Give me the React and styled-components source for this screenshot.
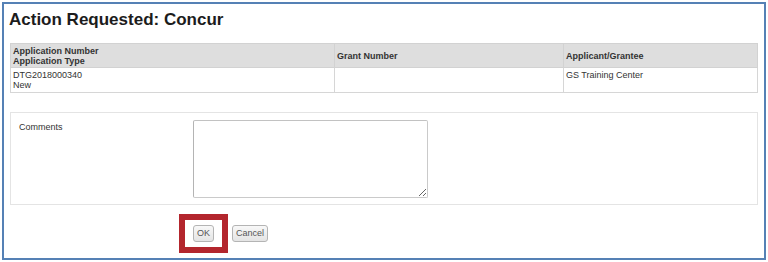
import React from "react";
import styled, { createGlobalStyle } from "styled-components";

const Global = createGlobalStyle`
  html, body { margin: 0; padding: 0; background: #ffffff; }
  body { font-family: "Liberation Sans", Arial, sans-serif; color: #333; }
`;

const Frame = styled.div`
  margin: 2px;
  width: 764px;
  box-sizing: border-box;
  border: 2px solid #5581b5;
  padding: 6px;
  background: #fff;
`;

const Title = styled.h1`
  margin: 0 0 13px -1px;
  font-size: 17px;
  line-height: 20px;
  font-weight: bold;
  color: #1c1c1c;
`;

const Table = styled.table`
  width: 100%;
  table-layout: fixed;
  border-collapse: collapse;
  border: 1px solid #d6d6d6;
  font-size: 9px;
  line-height: 10px;
`;

const Th = styled.th`
  box-sizing: border-box;
  width: ${(p) => (p.$w ? `${p.$w}px` : "auto")};
  background: #dedede;
  border: 1px solid #d2d2d2;
  padding: 2px 2px 1px;
  text-align: left;
  vertical-align: middle;
  font-weight: bold;
  color: #333;
`;

const Td = styled.td`
  border: 1px solid #d6d6d6;
  padding: 2px 2px 2px;
  vertical-align: top;
  color: #333;
  height: 20px;
`;

const Panel = styled.div`
  margin-top: 19px;
  border: 1px solid #e4e4e4;
  padding: 7px 0 6px 8px;
  display: grid;
  grid-template-columns: 174px 235px;
  align-items: start;
`;

const Label = styled.label`
  padding-top: 2px;
  font-size: 9px;
  line-height: 10px;
  color: #333;
`;

const TextArea = styled.textarea`
  box-sizing: border-box;
  width: 235px;
  height: 78px;
  margin: 0;
  border: 1px solid #cacaca;
  border-top-color: #c2c2c2;
  border-left-color: #b4b4b4;
  border-radius: 2px;
  resize: both;
  background: #fff;
  font-family: "Liberation Sans", Arial, sans-serif;
`;

const ButtonRow = styled.div`
  margin: 20px 0 10px;
  padding-left: 183px;
  display: flex;
  gap: 18px;
  align-items: center;
`;

const Highlight = styled.span`
  position: relative;
  display: inline-flex;
  &::after {
    content: "";
    position: absolute;
    top: -11px;
    left: -14px;
    width: 49px;
    height: 39px;
    box-sizing: border-box;
    border: 6px solid #b3262d;
    pointer-events: none;
  }
`;

const Button = styled.button`
  box-sizing: border-box;
  height: 17px;
  min-width: ${(p) => p.$w}px;
  padding: 0 3px;
  margin: 0;
  border: 1px solid #b4b4b4;
  border-radius: 3px;
  background: linear-gradient(#f8f8f8, #e4e4e4);
  font-family: "Liberation Sans", Arial, sans-serif;
  font-size: 9px;
  line-height: 15px;
  color: #555;
`;

export default function App() {
  return (
    <>
      <Global />
      <Frame>
        <Title>Action Requested: Concur</Title>
        <Table>
          <thead>
            <tr>
              <Th $w={324}>
                Application Number
                <br />
                Application Type
              </Th>
              <Th $w={229}>Grant Number</Th>
              <Th>Applicant/Grantee</Th>
            </tr>
          </thead>
          <tbody>
            <tr>
              <Td>
                DTG2018000340
                <br />
                New
              </Td>
              <Td></Td>
              <Td>GS Training Center</Td>
            </tr>
          </tbody>
        </Table>
        <Panel>
          <Label htmlFor="comments">Comments</Label>
          <TextArea id="comments" />
        </Panel>
        <ButtonRow>
          <Highlight>
            <Button $w={21}>OK</Button>
          </Highlight>
          <Button $w={36}>Cancel</Button>
        </ButtonRow>
      </Frame>
    </>
  );
}
